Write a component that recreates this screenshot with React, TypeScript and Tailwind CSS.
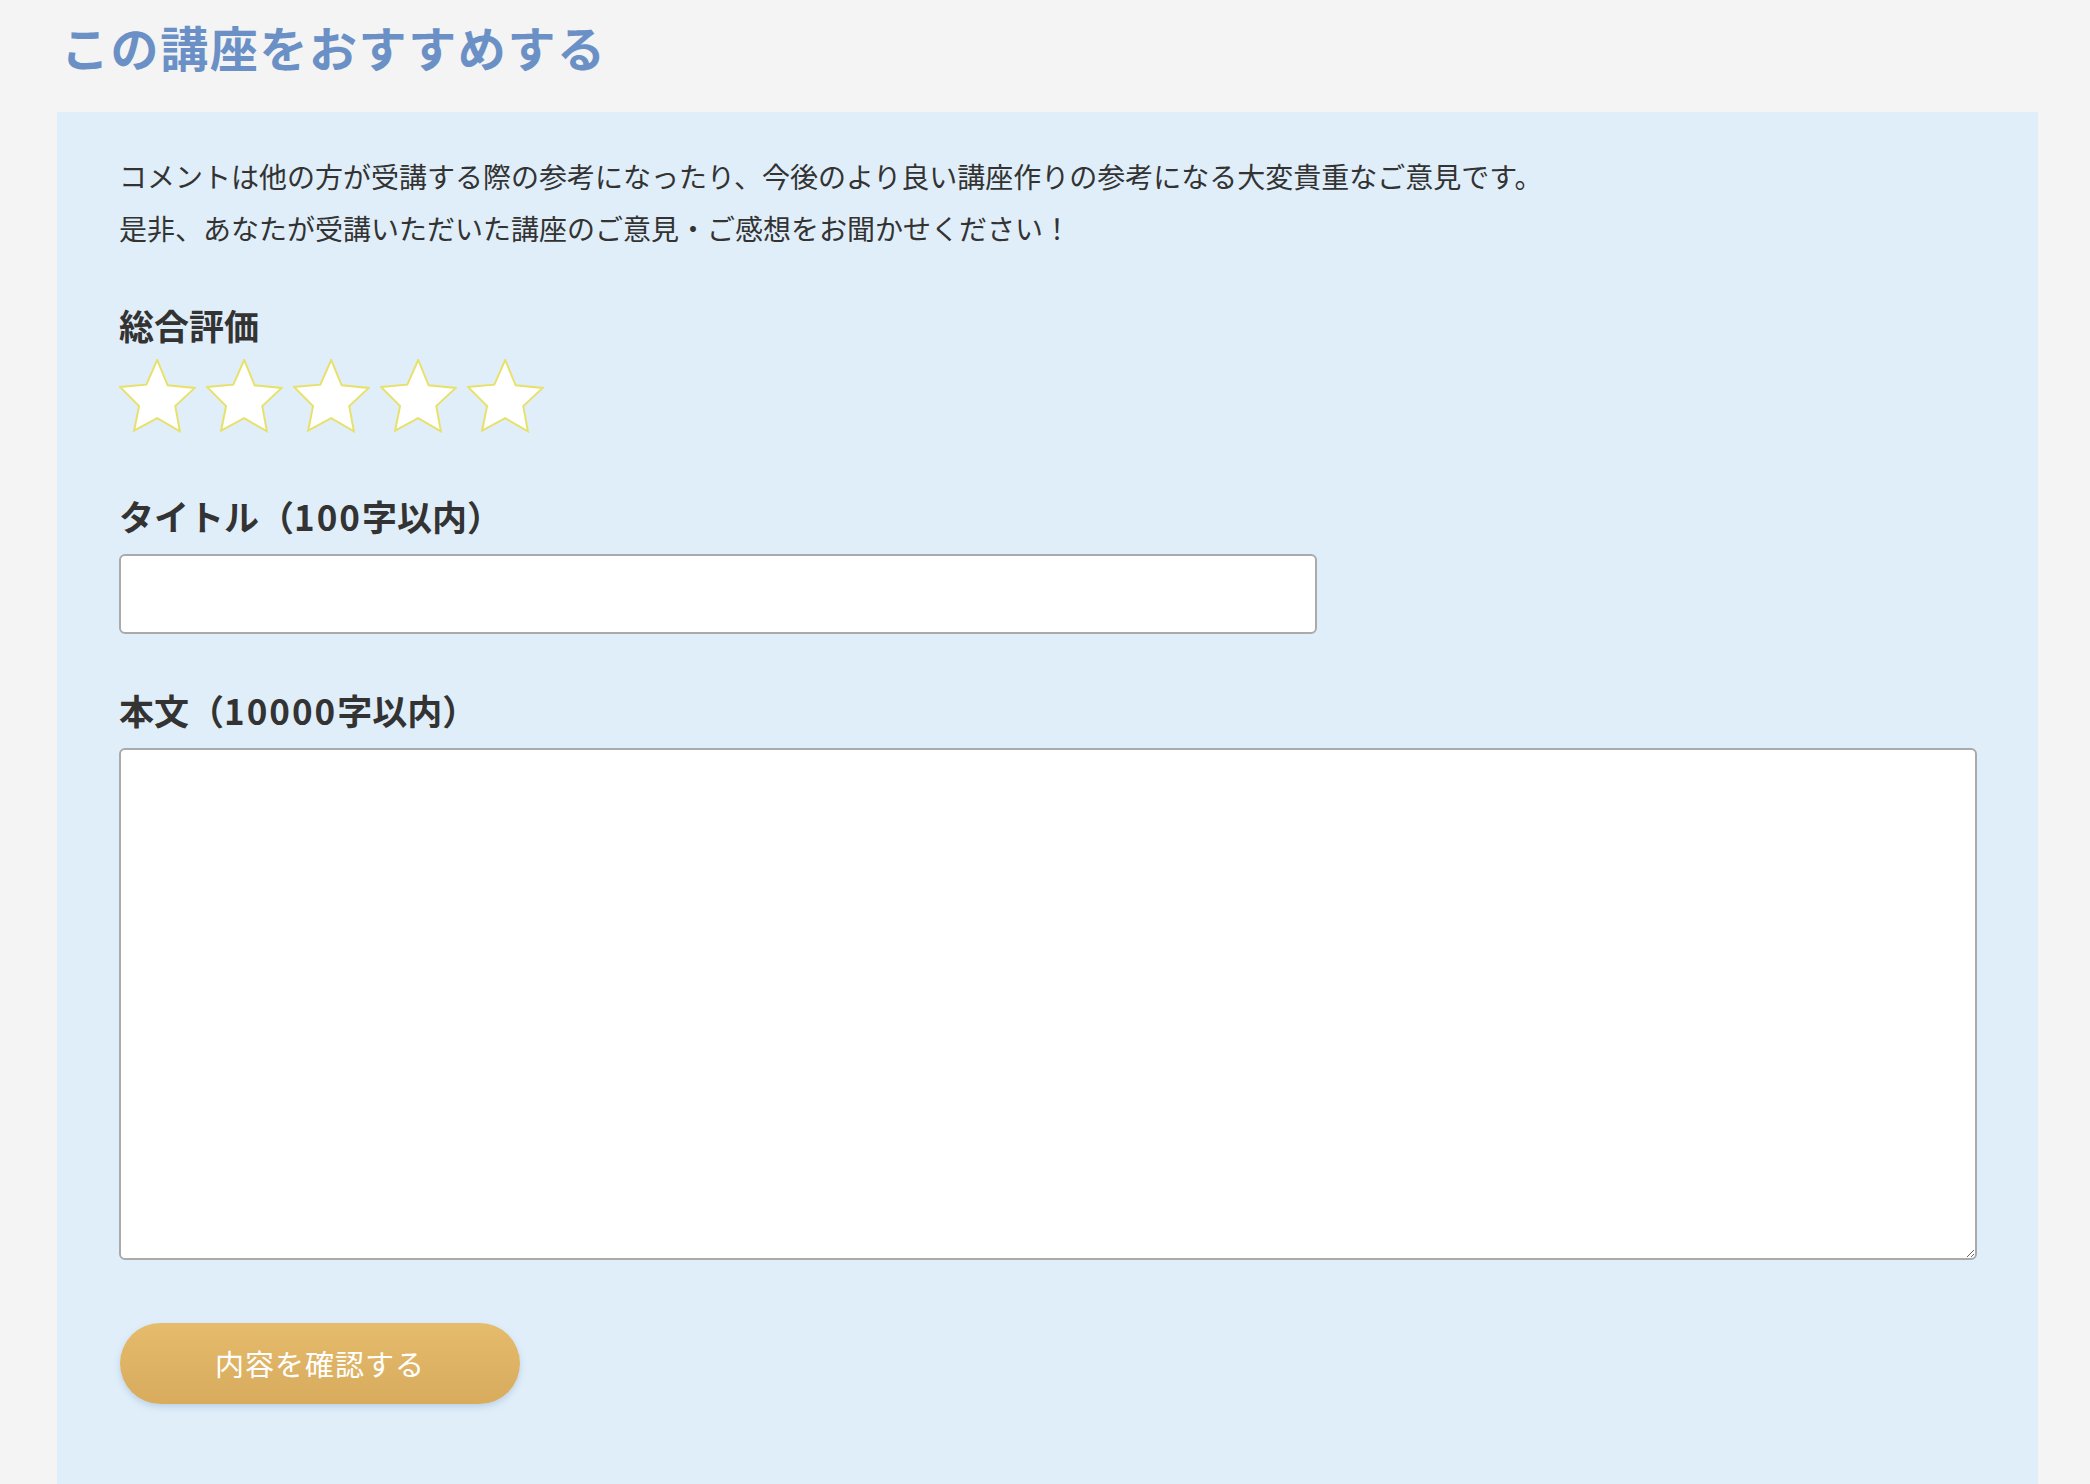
import React from "react";

const font = { fontFamily: '"Noto Sans CJK JP", "Noto Sans", sans-serif' };

function Star() {
  return (
    <svg width="77" height="74" viewBox="-1 -1 78 75">
      <polygon
        points="37.7,0 48.3,25.7 75.7,28.3 56,46.7 60.7,72.3 37.7,59 14.3,71.7 19.3,46.7 0,27.3 26.7,25"
        fill="#ffffff"
        stroke="#e7e16b"
        strokeWidth="2"
        strokeLinejoin="miter"
      />
    </svg>
  );
}

export default function App() {
  return (
    <div className="min-h-[1484px] w-[2090px] bg-[#f4f4f4] text-[#333333]" style={font}>
      <h1 className="ml-[61px] pt-[10px] text-[48px] font-bold leading-[72px] tracking-[1.6px] text-[#6b90c6]">
        この講座をおすすめする
      </h1>
      <div className="ml-[57px] mt-[30px] w-[1981px] bg-[#e0eef9] px-[62px] pt-[38px] pb-[120px]">
        <p className="text-[28px] leading-[52px]">
          コメントは他の方が受講する際の参考になったり、今後のより良い講座作りの参考になる大変貴重なご意見です。
          <br />
          是非、あなたが受講いただいた講座のご意見・ご感想をお聞かせください！
        </p>
        <div className="mt-[44px] text-[35px] font-bold leading-[54px]">総合評価</div>
        <div className="mt-[7px] flex gap-[10px]">
          <Star />
          <Star />
          <Star />
          <Star />
          <Star />
        </div>
        <div className="mt-[56px] text-[35px] font-bold leading-[54px]">
          タイトル（<span className="tracking-[2px]">100</span>字以内）
        </div>
        <input
          type="text"
          className="mt-[11px] block h-[80px] w-[1198px] rounded-[6px] border-2 border-[#aaaaaa] bg-white px-3 text-[28px] outline-none"
        />
        <div className="mt-[49px] text-[35px] font-bold leading-[54px]">
          本文（<span className="tracking-[2px]">10000</span>字以内）
        </div>
        <textarea className="mt-[11px] block h-[512px] w-[1858px] rounded-[6px] border-2 border-[#aaaaaa] bg-white p-3 text-[28px] outline-none" />
        <button
          type="button"
          className="ml-[1px] mt-[63px] flex h-[81px] w-[400px] items-center justify-center rounded-full bg-gradient-to-b from-[#e5bb6c] to-[#d8ab5d] text-[29px] tracking-[1px] text-white shadow-[0_3px_6px_rgba(120,160,200,0.35)]"
        >
          内容を確認する
        </button>
      </div>
    </div>
  );
}
